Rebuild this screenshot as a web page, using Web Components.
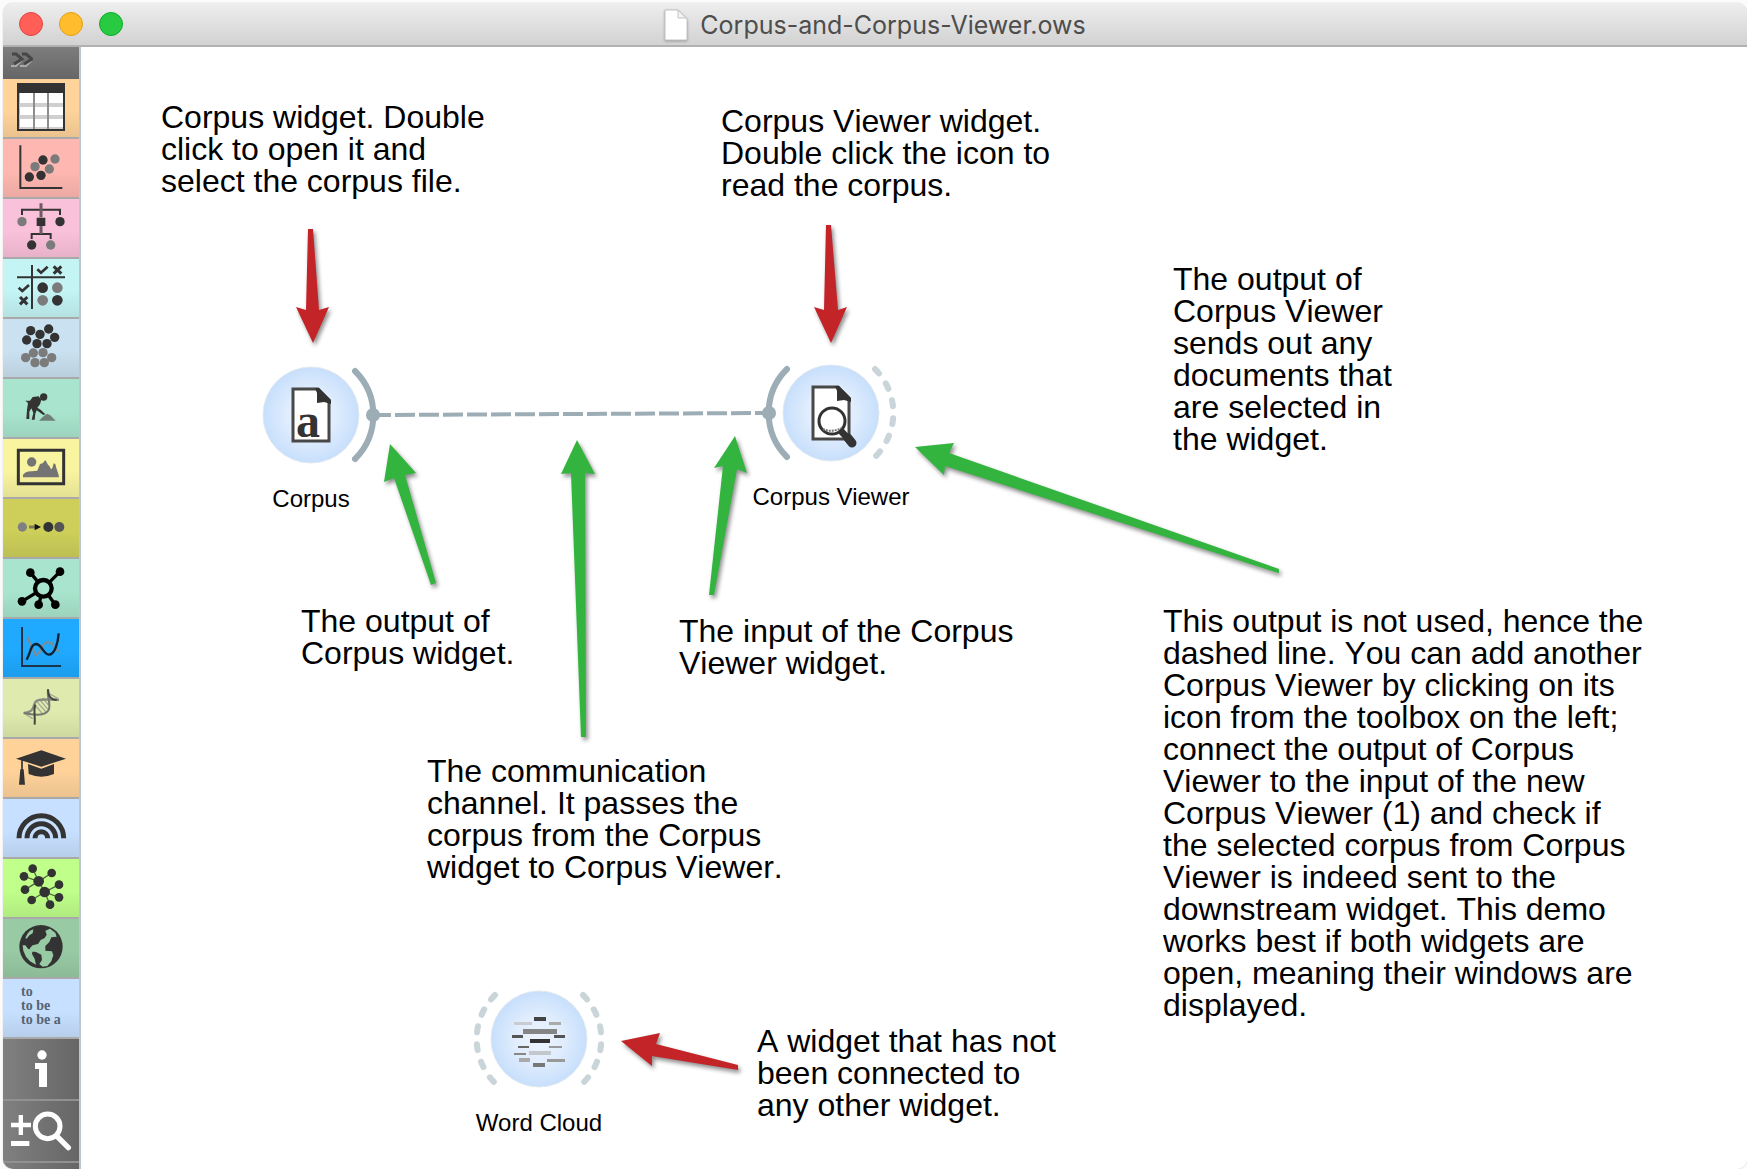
<!DOCTYPE html>
<html lang="en">
<head>
<meta charset="utf-8">
<title>Corpus-and-Corpus-Viewer.ows</title>
<style>
  body { margin: 0; background: #fbfbfb; font-family: "Liberation Sans", Arial, sans-serif; color: #000; }
</style>
</head>
<body>
<app-window>
  <span slot="title">Corpus-and-Corpus-Viewer.ows</span>
  <tool-dock slot="dock">
    <dock-item name="Data" icon="table" style="--bg:#ffd39a"></dock-item>
    <dock-item name="Visualize" icon="scatter" style="--bg:#ffb7b1"></dock-item>
    <dock-item name="Model" icon="tree" style="--bg:#fac1da"></dock-item>
    <dock-item name="Evaluate" icon="matrix" style="--bg:#c4f4f4"></dock-item>
    <dock-item name="Unsupervised" icon="cluster" style="--bg:#cae1f1"></dock-item>
    <dock-item name="Prototypes" icon="digger" style="--bg:#a9e5ce"></dock-item>
    <dock-item name="Image Analytics" icon="image" style="--bg:#f8f4a0"></dock-item>
    <dock-item name="Associate" icon="rule" style="--bg:#cdcf5a"></dock-item>
    <dock-item name="Networks" icon="network" style="--bg:#a9e5ce"></dock-item>
    <dock-item name="Time Series" icon="series" style="--bg:#1fa9ff"></dock-item>
    <dock-item name="Bioinformatics" icon="dna" style="--bg:#dfebae"></dock-item>
    <dock-item name="Educational" icon="cap" style="--bg:#ffd29a"></dock-item>
    <dock-item name="Spectroscopy" icon="rainbow" style="--bg:#c7e0ff"></dock-item>
    <dock-item name="Textable" icon="graph" style="--bg:#bfff8a"></dock-item>
    <dock-item name="Geo" icon="globe" style="--bg:#98caa4"></dock-item>
    <dock-item name="Text Mining" style="--bg:#c7e0ff">to<br>to be<br>to be a</dock-item>
    <dock-item tool name="Information" icon="info"></dock-item>
    <dock-item tool name="Zoom" icon="zoom"></dock-item>
  </tool-dock>

  <flow-canvas>
    <flow-link></flow-link>

    <flow-node icon="corpus" out="on" style="--x:230px;--y:368px">Corpus</flow-node>
    <flow-node icon="viewer" in="on" out="off" style="--x:750px;--y:366px">Corpus Viewer</flow-node>
    <flow-node icon="cloud" in="off" out="off" style="--x:458px;--y:992px">Word Cloud</flow-node>

    <flow-arrow color="#c32428" points="308,229 313,229 319,310 329,307 313,343 296,307 306,310"></flow-arrow>
    <flow-arrow color="#c32428" points="826,225 831,225 838,310 847,307 831,343 814,307 824,310"></flow-arrow>
    <flow-arrow color="#c32428" points="738,1065 738,1070 652,1056 652,1066 621,1041 660,1033 656,1044"></flow-arrow>
    <flow-arrow color="#33b43f" points="431,585 436,583 405,475 416,473 390,444 384,482 394,478"></flow-arrow>
    <flow-arrow color="#33b43f" points="581,737 586,737 585,473 595,474 577,440 561,474 571,473"></flow-arrow>
    <flow-arrow color="#33b43f" points="709,595 714,595 737,469 747,473 735,436 714,468 723,466"></flow-arrow>
    <flow-arrow color="#33b43f" points="1279,569 1279,573 1275,572 945,466 944,475 915,447 954,443 949,453"></flow-arrow>

    <flow-note style="--x:80px;--y:54px;--w:330px">Corpus widget. Double click to open it and select the corpus file.</flow-note>
    <flow-note style="--x:640px;--y:58px;--w:334px">Corpus Viewer widget. Double click the icon to read the corpus.</flow-note>
    <flow-note style="--x:1092px;--y:216px;--w:230px">The output of Corpus Viewer sends out any documents that are selected in the widget.</flow-note>
    <flow-note style="--x:220px;--y:558px;--w:240px">The output of Corpus widget.</flow-note>
    <flow-note style="--x:598px;--y:568px;--w:344px">The input of the Corpus Viewer widget.</flow-note>
    <flow-note style="--x:346px;--y:708px;--w:370px">The communication channel. It passes the corpus from the Corpus widget to Corpus Viewer.</flow-note>
    <flow-note style="--x:1082px;--y:558px;--w:484px">This output is not used, hence the dashed line. You can add another Corpus Viewer by clicking on its icon from the toolbox on the left; connect the output of Corpus Viewer to the input of the new Corpus Viewer (1) and check if the selected corpus from Corpus Viewer is indeed sent to the downstream widget. This demo works best if both widgets are open, meaning their windows are displayed.</flow-note>
    <flow-note style="--x:676px;--y:978px;--w:310px">A widget that has not been connected to any other widget.</flow-note>
  </flow-canvas>
</app-window>

<script>
const D = '#333', G = '#7b7b7b';
const dots = (r, fill, list) => list.map(([x, y]) => `<circle cx="${x}" cy="${y}" r="${r}" fill="${fill}"/>`).join('');

/* Dock icons: [viewBox top, drawing]; three units to one pixel. */
const DOCK_ICONS = {
  table: [237, `<path fill="${D}" d="M51 249h144v144H51z"/><path fill="#fff" d="M58 279h131v108H58z"/>
    <path fill="#cfcfcf" d="M58 309h131v12H58zM58 345h131v12H58zM58 381h131v6H58z"/><path fill="#8e8e8e" d="M99 279h6v108h-6zM141 279h6v108h-6z"/>`],
  scatter: [417, `<path d="M61 436V564H187" fill="none" stroke="${D}" stroke-width="6"/>` +
    dots(14, D, [[129,480],[88,531],[123,526]]) + dots(14, G, [[165,477],[105,500],[148,507]])],
  tree: [597, `<path d="M66 645V629H180V645M95 717V702H152V717" fill="none" stroke="${D}" stroke-width="6"/>
    <path d="M123 610V652M123 678V702" stroke="#6d5a64" stroke-width="9"/><path d="M110 653h26v25h-26z" fill="${D}"/>` +
    dots(14, G, [[66,665],[152,735]]) + dots(14, D, [[180,665],[95,735]])],
  matrix: [777, `<path d="M96 795V927M51 832H195" stroke="${D}" stroke-width="6"/>
    <path d="M112 808l11 10 20-18M56 863l11 10 20-18" fill="none" stroke="${D}" stroke-width="8"/>
    <path d="M161 799l23 22m0-22l-23 22M60 891l22 22m0-22l-22 22" stroke="${D}" stroke-width="9"/>` +
    dots(16, D, [[128,863],[172,901]]) + dots(16, G, [[172,863],[128,901]])],
  cluster: [27, dots(14, G, [[100,129],[129,128],[77,143],[155,143],[105,158],[133,158]]) +
    dots(14, D, [[92,62],[146,57],[120,73],[80,90],[164,82],[111,101],[141,101]])],
  digger: [207, `<circle cx="131" cy="261" r="11" fill="${D}"/>
    <path fill="${D}" d="M76 272l14 0 8-11 18-2 8 10-4 14-8 10 10 6 14 14-6 2-20-14-4 10-2 18h-9l5-20-6-14-6 10 0 22-9 0 2-28 3-20z"/>
    <path fill="#6f7f78" d="M117 332l12-12 12-9 10 5 16 16z"/>`],
  image: [387, `<path d="M55 421h136v100H55z" fill="none" stroke="${D}" stroke-width="9"/><circle cx="95" cy="456" r="14" fill="#747474"/>
    <path fill="#747474" d="M69 502v-8q9-11 27-10l16-2 8-20 8-2 8-10 8 14 4 4 5 10 4-4 4-14 5 2 3 12 6 18 2 10z"/>`],
  rule: [567, `<path d="M87 651h24" stroke="#7a7a50" stroke-width="9"/><path fill="#111" d="M104 641l19 10-19 10z"/>` +
    dots(14, '#808080', [[67,651]]) + dots(15, D, [[145,651]]) + dots(15, '#555', [[178,651]])],
  network: [747, `<path d="M130 835L91 788M130 835L180 785M130 835L66 874M130 835L116 884M130 835L166 884" stroke="#000" stroke-width="10"/>
    <circle cx="130" cy="835" r="25" fill="#a9e5ce" stroke="#000" stroke-width="13"/>` + dots(13, '#000', [[91,788],[180,785],[66,874],[116,884],[166,884]])],
  series: [27, `<path d="M66 51V168H183" fill="none" stroke="#1c3448" stroke-width="6"/>
    <path d="M82 80L94 108 108 137 120 124 130 104 142 96 156 100 164 116 178 125" fill="none" stroke="#7f8a94" stroke-width="6"/>
    <path d="M80 149C94 122 92 104 108 102C125 102 130 133 146 134C165 134 174 98 176 70" fill="none" stroke="#10222f" stroke-width="7"/>`],
  dna: [207, `<path d="M104 284l24 28M110 274l28 32M118 268l26 30M128 264l20 24M76 312l22 14M150 252l24 14" stroke="#a4a994" stroke-width="4"/>
    <path d="M71 309C104 306 98 290 106 276C116 262 156 272 177 269" fill="none" stroke="#8b8b82" stroke-width="7"/>
    <path d="M71 309C110 318 136 316 146 300C154 282 140 262 144 238" fill="none" stroke="#77776f" stroke-width="6"/>
    <path d="M104 344C106 316 100 300 106 284M144 238C146 262 152 268 170 270" fill="none" stroke="#44443f" stroke-width="6"/>`],
  cap: [387, `<path fill="${D}" d="M48 446l76-25 74 25-74 24zM84 462l40 14 38-14v30q-38 16-76 0z"/>
    <path d="M66 450v46" stroke="${D}" stroke-width="5"/><path fill="${D}" d="M61 478h10l4 46H57z"/>`],
  rainbow: [567, `<g fill="none" stroke="${D}" stroke-width="15"><path d="M57 685a67 68 0 01134 0"/><path d="M81 685a43 44 0 0186 0"/><path d="M105 685a19 20 0 0138 0"/></g>`],
  graph: [747, `<path d="M98 776L116 814L72 799M116 814L155 789M116 814L75 839M116 814L134 846L177 824M134 846L95 870M134 846L177 862M134 846L150 884" fill="none" stroke="#4d6b38" stroke-width="4"/>` +
    dots(16, D, [[116,814],[134,846]]) + dots(13, D, [[98,776],[72,799],[155,789],[177,824],[75,839],[95,870],[177,862],[150,884]])],
  globe: [57, `<circle cx="123" cy="140" r="65" fill="${D}"/>
    <path fill="#98caa4" d="M136 92l14-6 16 12 4 12-16 2-6 14-12 12 0 14 20 2 4 12-6 18-12 14-14 2-10-8 8-12-2-16-16-8-18-2 0-10 8-8 16-4 8-12 12-6 6-10zM68 136l8 0 8 10 14 4-2 12 8 14 4 18-18-10-12-14-8-18zM90 92l10-4-2 12-10 6-8 10-4-2 6-12z"/>`],
  info: [417, `<circle cx="126" cy="465" r="14" fill="#fff"/><path fill="#fff" d="M105 489h36v72h-24v-54h-12z"/>`],
  zoom: [603, `<path fill="#fff" d="M33 668h60v14H33zM56 645h13v60H56zM33 723h55v15H33z"/>
    <circle cx="143" cy="679" r="37" fill="none" stroke="#fff" stroke-width="15"/><path d="M172 710l33 33" stroke="#fff" stroke-width="16" stroke-linecap="round"/>`]
};

/* Node icons, drawn round the node's centre at (0,0). */
const PAGE = `<path d="M-18-26H7L18-15V26H-18z" fill="#fff" stroke="#484848" stroke-width="3"/><path d="M4-27H8L20-15V-11L13-13 6-12V-22z" fill="${D}"/>`;
const NODE_ICONS = {
  corpus: PAGE + `<text x="-3" y="22" text-anchor="middle" font-family="Liberation Serif, serif" font-weight="700" font-size="48" fill="${D}">a</text>`,
  viewer: PAGE + `<circle cx="1" cy="8" r="13" fill="#fff" stroke="${D}" stroke-width="3"/><path d="M-8 16Q1 20 10 15" fill="none" stroke="#777" stroke-width="2" stroke-dasharray="2 1"/>
    <path d="M10 18L21 30" stroke="${D}" stroke-width="7"/><path d="M17 25L21 30" stroke="${D}" stroke-width="9" stroke-linecap="round"/>`,
  cloud: [[-5,-22,12,4,'#444'],[-25,-17,18,3,'#c9ccd1'],[10,-17,12,3,'#aaa'],[-16,-10,34,5,'#858585'],[-27,-4,11,3,'#555'],[15,-4,11,3,'#555'],
    [-9,0,20,4,'#333'],[-21,7,11,2,'#666'],[10,7,13,2,'#999'],[-25,14,12,2,'#888'],[-10,12,22,4,'#c4c8cc'],[-20,19,11,4,'#aaa'],[8,20,18,3,'#999'],[-6,24,12,4,'#777']]
    .map(([x, y, w, h, c]) => `<rect x="${x}" y="${y}" width="${w}" height="${h}" fill="${c}"/>`).join('')
};

function element(name, render) {
  customElements.define(name, class extends HTMLElement {
    constructor() { super(); this.attachShadow({ mode: 'open' }); }
    connectedCallback() { this.shadowRoot.innerHTML = render(this); }
  });
}

element('app-window', () => `
  <style>
    :host { display: block; box-sizing: border-box; padding: 3px 0 0 3px; }
    .frame { display: flex; flex-direction: column; min-height: calc(100vh - 3px);
      border-radius: 10px; overflow: hidden; background: #fff; box-shadow: 0 0 1px #999; }
    header { display: grid; grid-template-columns: 1fr auto 1fr; align-items: center; height: 44px; box-sizing: border-box;
      background: linear-gradient(#eee, #d2d2d2); border-bottom: 2px solid #b1b1b1; }
    .lights { display: flex; gap: 16px; padding-left: 16px; }
    button { width: 24px; height: 24px; padding: 0; border-radius: 50%; border: 1px solid var(--edge); background: var(--fill); }
    .close { --fill: #ff5f57; --edge: #e2463f; }
    .min { --fill: #ffbd2e; --edge: #e1a116; }
    .max { --fill: #28ca42; --edge: #12ac28; }
    .title { display: flex; align-items: center; gap: 12px; padding-top: 2px; }
    h1 { margin: 0; font: 400 25px/32px Inter, Roboto, sans-serif; color: #4d4d4d; white-space: nowrap; }
    svg { display: block; filter: drop-shadow(0 1px 1px #999); }
    main { display: flex; flex: 1; }
    ::slotted(flow-canvas) { flex: 1; }
  </style>
  <div class="frame">
    <header>
      <div class="lights"><button class="close" aria-label="Close"></button><button class="min" aria-label="Minimize"></button><button class="max" aria-label="Zoom window"></button></div>
      <div class="title">
        <svg width="24" height="32" viewBox="0 0 24 32"><path d="M1 1h13l9 9v21H1z" fill="#fff" stroke="#c4c4c4"/><path d="M14 1v8h8z" fill="#f3f3f3" stroke="#c4c4c4"/></svg>
        <h1><slot name="title"></slot></h1>
      </div>
    </header>
    <main><slot name="dock"></slot><slot></slot></main>
  </div>`);

element('tool-dock', () => `
  <style>
    :host { display: flex; flex-direction: column; width: 76px; border-right: 2px solid #bfc7cc; background: linear-gradient(90deg, #808080, #666); }
    .expand { display: flex; align-items: flex-start; height: 32px; padding: 4px 0 0 8px; border: 0; background: linear-gradient(#7d7d7d, #666); }
    svg { display: block; }
  </style>
  <button class="expand" aria-label="Expand dock"><svg width="22" height="18" viewBox="0 0 22 18" fill="none" stroke-width="3">
    <path d="M0 15H5L11 9M9 15H15L21 9" stroke="#aaa" stroke-width="2"/>
    <path d="M1 3H5L11 8 3 13M11 3H15L21 8 13 13" stroke="#474747"/></svg></button>
  <slot></slot>`);

element('dock-item', el => {
  const icon = DOCK_ICONS[el.getAttribute('icon')];
  const h = el.hasAttribute('tool') ? 180 : 174;
  return `
  <style>
    :host { display: block; }
    button { display: flex; align-items: center; width: 100%; height: 60px; box-sizing: border-box; padding: 0; border: 0; border-bottom: 2px solid #a9a9a9;
      background: linear-gradient(transparent 55%, rgba(0,0,0,.08)) var(--bg); color: #566270; text-align: left; font: 700 14px/14px "Liberation Serif", serif; }
    :host([tool]) button { height: 62px; background: none; border-bottom-color: #919191; }
    svg { display: block; }
    .words { padding: 0 0 4px 18px; }
  </style>
  <button aria-label="${el.getAttribute('name')}">${icon
    ? `<svg width="76" height="${h / 3}" viewBox="9 ${icon[0]} 228 ${h}">${icon[1]}</svg>`
    : '<span class="words"><slot></slot></span>'}</button>`;
});

element('flow-canvas', () => `
  <style>:host { display: block; position: relative; background: #fff; }</style><slot></slot>`);

element('flow-note', () => `
  <style>
    :host { position: absolute; left: var(--x); top: var(--y); width: var(--w); }
    p { margin: 0; font-size: 32px; line-height: 32px; font-kerning: none; }
  </style><p><slot></slot></p>`);

element('flow-node', el => {
  const arc = (side, state) => !state ? '' : `<path d="M${44 * side}-44A62 62 0 0 ${side > 0 ? 1 : 0} ${44 * side} 44" fill="none" stroke-linecap="round" stroke-width="6" ` +
    (state === 'on' ? `stroke="#9cadb5"/><circle cx="${62 * side}" cy="0" r="7" fill="#9cadb5"/>` : 'stroke="#cad5da" stroke-dasharray="6 12"/>');
  return `
  <style>
    :host { position: absolute; left: var(--x); top: var(--y); width: 200px; margin: -70px 0 0 -100px; display: flex; flex-direction: column; align-items: center; }
    svg { display: block; }
    span { font-size: 24px; line-height: 28px; white-space: nowrap; }
  </style>
  <svg width="140" height="140" viewBox="-70 -70 140 140">
    <defs><radialGradient id="g"><stop offset="0" stop-color="#eef4fe"/><stop offset=".5" stop-color="#e0edfd"/><stop offset="1" stop-color="#c7dffc"/></radialGradient></defs>
    <circle r="48" fill="url(#g)" stroke="#e3e9ef"/>
    ${arc(-1, el.getAttribute('in'))}${arc(1, el.getAttribute('out'))}
    ${NODE_ICONS[el.getAttribute('icon')]}
  </svg>
  <span><slot></slot></span>`;
});

/* Links and arrows are given in window coordinates; the canvas starts at (81,47). */
const OVERLAY = `<style>
  :host { position: absolute; inset: 0; pointer-events: none; }
  svg { display: block; width: 100%; height: 100%; overflow: visible; }
  polygon { filter: drop-shadow(2px 3px 2px rgba(0,0,0,.45)); }
</style>`;
element('flow-link', () => OVERLAY +
  `<svg><path transform="translate(-81 -47)" d="M371 415L769 413" stroke="#9cadb5" stroke-width="4" stroke-dasharray="20 4"/></svg>`);
element('flow-arrow', el => OVERLAY +
  `<svg><g transform="translate(-81 -47)"><polygon points="${el.getAttribute('points')}" fill="${el.getAttribute('color')}"/></g></svg>`);
</script>
</body>
</html>
